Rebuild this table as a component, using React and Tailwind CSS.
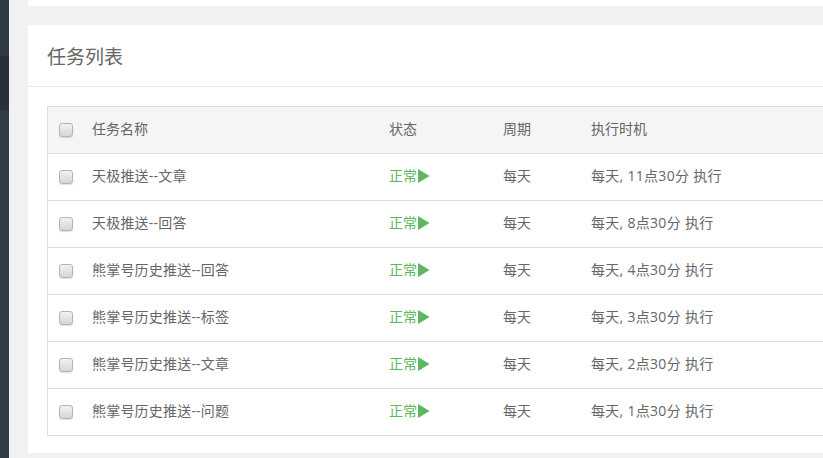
import React from 'react';

const tasks = [
  { name: '天极推送--文章', status: '正常', cycle: '每天', time: '每天, 11点30分 执行' },
  { name: '天极推送--回答', status: '正常', cycle: '每天', time: '每天, 8点30分 执行' },
  { name: '熊掌号历史推送--回答', status: '正常', cycle: '每天', time: '每天, 4点30分 执行' },
  { name: '熊掌号历史推送--标签', status: '正常', cycle: '每天', time: '每天, 3点30分 执行' },
  { name: '熊掌号历史推送--文章', status: '正常', cycle: '每天', time: '每天, 2点30分 执行' },
  { name: '熊掌号历史推送--问题', status: '正常', cycle: '每天', time: '每天, 1点30分 执行' },
];

function Checkbox() {
  return (
    <span className="block w-[14px] h-[14px] rounded-[3px] border border-[#b4b4b4] bg-gradient-to-b from-[#f2f2f2] to-[#d6d6d6] shadow-[0_1px_1px_rgba(0,0,0,0.12)]" />
  );
}

function Row({ header, children }) {
  return (
    <div
      className={`grid grid-cols-[33px_297px_114px_88px_1fr] items-center pb-[3px] ${header ? 'h-[46px] bg-[#f5f5f5]' : 'h-[47px] bg-white border-t border-[#ddd]'}`}
    >
      {children}
    </div>
  );
}

export default function App() {
  return (
    <div
      className="flex w-[823px] h-[458px] overflow-hidden bg-[#f1f1f1] text-[14px] text-[#666]"
      style={{ fontFamily: '"Open Sans", "Noto Sans CJK SC", sans-serif' }}
    >
      <div className="w-[9px] flex flex-col shrink-0">
        <div className="h-[56px] bg-[#2f3a44]" />
        <div className="h-[54px] bg-[#28303a]" />
        <div className="flex-1 bg-[#323c46]" />
      </div>
      <div className="flex-1 flex flex-col pl-[19px] min-w-0">
        <div className="h-[6px] bg-white shrink-0" />
        <div className="mt-[19px] bg-white h-[428px] flex flex-col min-w-0 overflow-hidden">
          <div className="h-[62px] shrink-0 flex items-center pl-[19px] pt-[3px] border-b border-[#e7e7e7]">
            <h2 className="text-[19px] text-[#666] font-normal">任务列表</h2>
          </div>
          <div className="pt-[19px] pl-[19px]">
            <div className="w-[900px] border border-[#ddd]">
              <Row header>
                <div className="pl-[11px] pt-[3px]"><Checkbox /></div>
                <div className="pl-[11px]">任务名称</div>
                <div className="pl-[11px]">状态</div>
                <div className="pl-[11px]">周期</div>
                <div className="pl-[11px]">执行时机</div>
              </Row>
              {tasks.map((t, i) => (
                <Row key={i}>
                  <div className="pl-[11px] pt-[3px]"><Checkbox /></div>
                  <div className="pl-[11px] tracking-[0.2px]">{t.name}</div>
                  <div className="pl-[11px] flex items-center text-[#5cb85c]">
                    {t.status}
                    <svg width="12" height="14" viewBox="0 0 12 14" className="ml-[1px]">
                      <polygon points="0,0 11.5,7 0,14" fill="#5cb85c" />
                    </svg>
                  </div>
                  <div className="pl-[11px]">{t.cycle}</div>
                  <div className="pl-[11px] tracking-[0.3px]">{t.time}</div>
                </Row>
              ))}
            </div>
          </div>
        </div>
      </div>
    </div>
  );
}
